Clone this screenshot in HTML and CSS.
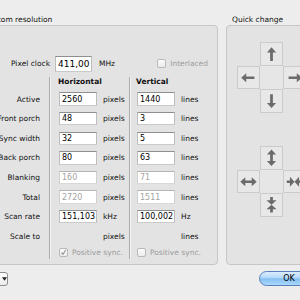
FILE: index.html
```html
<!DOCTYPE html>
<html lang="en">
<head>
  <meta charset="UTF-8">
  <title>Custom resolution</title>
  <link rel="stylesheet" href="styles.css">
</head>
<body>
  <div class="window">
    <div class="panels">

      <!-- Custom resolution -->
      <section class="group group-custom">
        <div class="group-title">Custom resolution</div>
        <div class="group-box">
          <div class="clock-row">
            <span class="clock-label">Pixel clock</span>
            <input class="field field-clock" value="411,00">
            <span class="unit">MHz</span>
            <span class="check disabled interlaced"><span class="box"></span>Interlaced</span>
          </div>

          <div class="timing">
            <div class="col col-labels">
              <div class="head"></div>
              <div class="row">Active</div>
              <div class="row">Front porch</div>
              <div class="row">Sync width</div>
              <div class="row">Back porch</div>
              <div class="row">Blanking</div>
              <div class="row">Total</div>
              <div class="row">Scan rate</div>
              <div class="row">Scale to</div>
              <div class="foot"></div>
            </div>
            <div class="divider"></div>
            <div class="col col-h">
              <div class="head">Horizontal</div>
              <div class="row"><input class="field" value="2560"><span>pixels</span></div>
              <div class="row"><input class="field" value="48"><span>pixels</span></div>
              <div class="row"><input class="field" value="32"><span>pixels</span></div>
              <div class="row"><input class="field" value="80"><span>pixels</span></div>
              <div class="row"><input class="field" value="160" disabled><span>pixels</span></div>
              <div class="row"><input class="field" value="2720" disabled><span>pixels</span></div>
              <div class="row"><input class="field" value="151,103"><span>kHz</span></div>
              <div class="row"><span class="blank"></span><span>pixels</span></div>
              <div class="foot check disabled">
                <span class="box"><svg viewBox="0 0 9 9"><path d="M1.8 4.6 L3.8 6.8 L7.6 1" /></svg></span>Positive sync.
              </div>
            </div>
            <div class="divider"></div>
            <div class="col col-v">
              <div class="head">Vertical</div>
              <div class="row"><input class="field" value="1440"><span>lines</span></div>
              <div class="row"><input class="field" value="3"><span>lines</span></div>
              <div class="row"><input class="field" value="5"><span>lines</span></div>
              <div class="row"><input class="field" value="63"><span>lines</span></div>
              <div class="row"><input class="field" value="71" disabled><span>lines</span></div>
              <div class="row"><input class="field" value="1511" disabled><span>lines</span></div>
              <div class="row"><input class="field" value="100,002"><span>Hz</span></div>
              <div class="row"><span class="blank"></span><span>lines</span></div>
              <div class="foot check disabled"><span class="box"></span>Positive sync.</div>
            </div>
          </div>
        </div>
      </section>

      <!-- Quick change -->
      <section class="group group-quick">
        <div class="group-title">Quick change</div>
        <div class="group-box">
          <div class="cross">
            <span></span>
            <span class="key"><svg viewBox="0 0 23 23"><path d="M11.5 4.5 L16.5 10 L13 10 L13 19.5 L10 19.5 L10 10 L6.5 10 Z"/></svg></span>
            <span></span>
            <span class="key"><svg viewBox="0 0 23 23"><path d="M3.5 11.5 L9 6.5 L9 10 L18 10 L18 13 L9 13 L9 16.5 Z"/></svg></span>
            <span class="mid"></span>
            <span class="key"><svg viewBox="0 0 23 23"><path d="M19.5 11.5 L14 6.5 L14 10 L5 10 L5 13 L14 13 L14 16.5 Z"/></svg></span>
            <span></span>
            <span class="key"><svg viewBox="0 0 23 23"><path d="M11.5 19.5 L16.5 14 L13 14 L13 4.5 L10 4.5 L10 14 L6.5 14 Z"/></svg></span>
            <span></span>
          </div>

          <div class="cross cross-size">
            <span></span>
            <span class="key"><svg viewBox="0 0 23 23"><path d="M11.5 2.5 L16.5 8 L13 8 L13 15 L16.5 15 L11.5 20.5 L6.5 15 L10 15 L10 8 L6.5 8 Z"/></svg></span>
            <span></span>
            <span class="key"><svg viewBox="0 0 23 23"><path d="M2.5 11.5 L8 6.5 L8 10 L15 10 L15 6.5 L20.5 11.5 L15 16.5 L15 13 L8 13 L8 16.5 Z"/></svg></span>
            <span class="mid"></span>
            <span class="key"><svg viewBox="0 0 23 23"><path d="M3 10 L6.5 10 L6.5 6 L11.5 11.5 L6.5 17 L6.5 13 L3 13 Z M20 10 L16.5 10 L16.5 6 L11.5 11.5 L16.5 17 L16.5 13 L20 13 Z"/></svg></span>
            <span></span>
            <span class="key"><svg viewBox="0 0 23 23"><path d="M10 3 L13 3 L13 6.5 L17 6.5 L11.5 11.5 L6 6.5 L10 6.5 Z M10 20 L13 20 L13 16.5 L17 16.5 L11.5 11.5 L6 16.5 L10 16.5 Z"/></svg></span>
            <span></span>
          </div>
        </div>
      </section>
    </div>

    <div class="footer">
      <button class="popup"><svg viewBox="0 0 6 4"><path d="M0 0 L6 0 L3 4 Z"/></svg></button>
      <button class="ok">OK</button>
    </div>
  </div>
</body>
</html>
```

FILE: styles.css
```css
* {
  margin: 0;
  padding: 0;
  box-sizing: border-box;
}

body {
  margin: 0;
  font-family: "DejaVu Sans", sans-serif;
  font-size: 7.5px;
  color: #111;
}

.window {
  width: 300px;
  height: 300px;
  overflow: hidden;
  background-color: #ededed;
  padding-top: 14px;
}

.panels {
  display: flex;
  gap: 8px;
  margin-left: -22px;
}

.group-title {
  height: 11px;
  line-height: 11px;
  padding-left: 6px;
  white-space: nowrap;
}

.group-box {
  height: 240px;
  border: 1px solid #c6c6c6;
  border-radius: 4px;
  background-color: #e3e3e3;
}

.group-custom {
  width: 240px;
  flex-shrink: 0;
}

.group-quick {
  width: 110px;
  flex-shrink: 0;
}

/* Pixel clock */
.clock-row {
  display: flex;
  align-items: center;
  height: 16px;
  margin-top: 29.5px;
}

.clock-label {
  width: 71px;
  text-align: right;
  white-space: nowrap;
}

.field {
  width: 38px;
  height: 13.4px;
  margin-right: 6px;
  padding: 0 0 0 2px;
  border: 1px solid;
  border-color: #8f8f8f #bdbdbd #cacaca #bdbdbd;
  background-color: #fff;
  font-family: "DejaVu Sans", sans-serif;
  font-size: 8px;
  color: #000;
  outline: none;
}

.field:disabled {
  color: #a3a3a3;
  border-color: #b4b4b4 #d0d0d0 #d8d8d8 #d0d0d0;
}

.field-clock {
  width: 37px;
  height: 16px;
  margin-left: 5px;
  margin-right: 7px;
  padding: 0 0 0 2px;
  font-size: 9px;
}

.interlaced {
  margin-left: auto;
  margin-right: 9px;
}

/* Checkboxes */
.check {
  display: flex;
  align-items: center;
  white-space: nowrap;
}

.check .box {
  width: 9px;
  height: 9px;
  margin-right: 4px;
  border: 1px solid #b9b9b9;
  border-radius: 2px;
  background: linear-gradient(#fbfbfb, #ececec);
}

.check .box svg {
  display: block;
  width: 7px;
  height: 7px;
  fill: none;
  stroke: #9a9a9a;
  stroke-width: 1.6;
}

.check.disabled {
  color: #9c9c9c;
}

/* Timing table */
.timing {
  display: flex;
  margin-top: 5.5px;
}

.col {
  display: flex;
  flex-direction: column;
}

.head {
  height: 12.4px;
  line-height: 10px;
  font-weight: bold;
  white-space: nowrap;
}

.row {
  height: 19.6px;
  display: flex;
  align-items: center;
  white-space: nowrap;
}

.foot {
  height: 12.6px;
}

.col-labels {
  width: 61px;
  margin-right: 9px;
}

.col-labels .row {
  justify-content: flex-end;
}

.divider {
  width: 2px;
  border-left: 1px solid #ababab;
  border-right: 1px solid #f5f5f5;
}

.col-h {
  width: 78px;
  padding-left: 8px;
}

.col-h .head {
  margin-left: -1px;
}

.col-v {
  flex: 1;
  padding-left: 6px;
}

.col-v .head {
  margin-left: -1px;
}

.blank {
  width: 44px;
}

/* Quick change arrows */
.cross {
  display: grid;
  grid-template-columns: repeat(3, 23px);
  grid-template-rows: repeat(3, 23.5px);
  margin-top: 16px;
  margin-left: 10px;
}

.cross-size {
  margin-top: 33.5px;
}

.key {
  border: 1px solid #cbcbcb;
  background-color: #e8e8e8;
}

.key svg {
  display: block;
  width: 21px;
  height: 21.5px;
  fill: #6b6b6b;
}

.mid {
  background-color: #e6e6e6;
}

/* Footer buttons */
.footer {
  display: flex;
  justify-content: space-between;
  align-items: flex-start;
  margin-top: 6px;
}

.popup {
  width: 40px;
  height: 14px;
  margin-top: 1px;
  margin-left: -32px;
  padding-left: 33px;
  border: 1px solid #8e8e8e;
  border-radius: 3px;
  background: linear-gradient(#ffffff, #ececec);
  display: flex;
  align-items: center;
}

.popup svg {
  width: 5px;
  height: 4px;
  fill: #222;
}

.ok {
  width: 60px;
  height: 15px;
  margin-right: -19px;
  border: 1px solid #5a80bb;
  border-radius: 8px;
  background: linear-gradient(#dcedfd 0%, #b3d9fb 45%, #85c0f2 52%, #a9d8fd 100%);
  font-family: "DejaVu Sans", sans-serif;
  font-size: 8px;
  color: #000;
  padding-right: 0;
}
```
